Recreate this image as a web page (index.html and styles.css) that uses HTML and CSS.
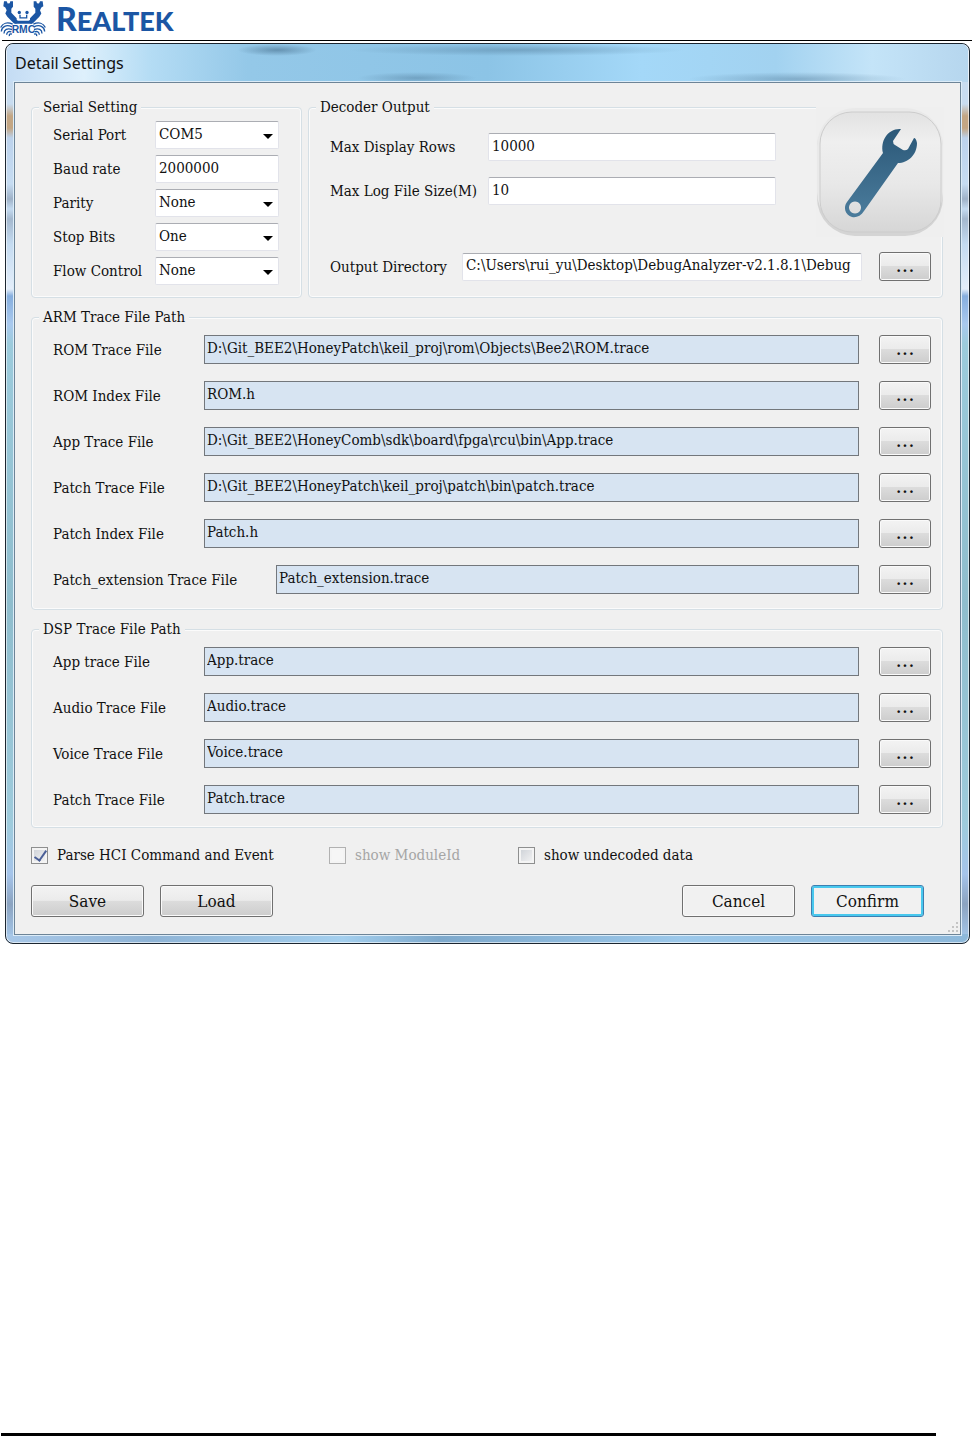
FILE: index.html
```
<!DOCTYPE html>
<html lang="en">
<head>
    <meta charset="UTF-8">
    <meta name="viewport" content="width=device-width, initial-scale=1.0">
    <title>Detail Settings</title>
    <link rel="stylesheet" href="styles.css">
</head>
<body>
    <header class="page-header">
        <svg class="crab" viewBox="0 0 138 110" aria-hidden="true">
            <path d="M12 3h8l3 7 6-1 2-6h8v17l-5 6v12l16 16v16H42L22 50l-6-10 4-10-4-8-6-4z"/>
            <path d="M128 3h-8l-3 7-6-1-2-6h-8v17l5 6v12L90 54v16h8l20-20 6-10-4-10 4-8 6-4z"/>
            <path d="M44 56l10 6h32l10-6v15H44z"/>
            <circle cx="58" cy="37" r="5"/>
            <circle cx="81" cy="37" r="5"/>
            <path class="line" d="M60 44v9h20v-9"/>
            <path class="line" d="M2 82c6-13 20-17 36-10M4 94c1-15 15-22 32-14M12 100c0-12 10-17 24-12M20 104c0-8 6-12 14-9M28 108c-1-6 3-8 8-6"/>
            <path class="line" d="M136 82c-6-13-20-17-36-10M134 94c-1-15-15-22-32-14M126 100c0-12-10-17-24-12M118 104c0-8-6-12-14-9M110 108c1-6-3-8-8-6"/>
            <text x="35" y="99">RMC</text>
        </svg>
        <span class="brand"><span class="brand-initial">R</span>EALTEK</span>
    </header>

    <main class="window">
        <h1 class="titlebar">Detail Settings</h1>
        <form class="client" onsubmit="return false">
            <div class="top-groups">
                <fieldset class="group">
                    <legend>Serial Setting</legend>
                    <div class="serial-rows">
                        <div class="serial-row">
                            <label for="serialPort">Serial Port</label>
                            <span class="combo"><select id="serialPort"><option>COM5</option></select></span>
                        </div>
                        <div class="serial-row">
                            <label for="baudRate">Baud rate</label>
                            <input type="text" id="baudRate" value="2000000">
                        </div>
                        <div class="serial-row">
                            <label for="parity">Parity</label>
                            <span class="combo"><select id="parity"><option>None</option></select></span>
                        </div>
                        <div class="serial-row">
                            <label for="stopBits">Stop Bits</label>
                            <span class="combo"><select id="stopBits"><option>One</option></select></span>
                        </div>
                        <div class="serial-row">
                            <label for="flowControl">Flow Control</label>
                            <span class="combo"><select id="flowControl"><option>None</option></select></span>
                        </div>
                    </div>
                </fieldset>

                <fieldset class="group decoder">
                    <legend>Decoder Output</legend>
                    <div class="decoder-rows">
                        <div class="decoder-row">
                            <label for="maxRows">Max Display Rows</label>
                            <input type="text" id="maxRows" value="10000">
                        </div>
                        <div class="decoder-row">
                            <label for="maxSize">Max Log File Size(M)</label>
                            <input type="text" id="maxSize" value="10">
                        </div>
                        <div class="output-row">
                            <label for="outputDir">Output Directory</label>
                            <input type="text" id="outputDir" value="C:\Users\rui_yu\Desktop\DebugAnalyzer-v2.1.8.1\Debug">
                            <button type="button" class="browse">...</button>
                        </div>
                    </div>
                    <svg class="wrench" viewBox="0 0 128 130" aria-hidden="true">
                        <defs>
                            <linearGradient id="tile" x1="0" y1="0" x2="0" y2="1">
                                <stop offset="0" stop-color="#e2e2e2"/>
                                <stop offset=".25" stop-color="#efefef"/>
                                <stop offset=".6" stop-color="#e8e8e8"/>
                                <stop offset="1" stop-color="#d6d6d6"/>
                            </linearGradient>
                            <linearGradient id="steel" x1="0" y1="0" x2="0" y2="1">
                                <stop offset="0" stop-color="#2b5878"/>
                                <stop offset="1" stop-color="#4b7c9c"/>
                            </linearGradient>
                        </defs>
                        <rect width="128" height="130" fill="#efefef"/>
                        <rect x="1" y="3" width="126" height="126" rx="38" fill="#d4d4d4"/>
                        <rect x="1" y="1" width="126" height="122" rx="38" fill="#e9e9e9"/>
                        <rect x="4" y="5" width="121" height="120" rx="32" fill="url(#tile)" stroke="#cccccc"/>
                        <path fill="url(#steel)" fill-rule="evenodd" d="M85 22L77 34Q77 37 79 38L87 43Q90 44 92 42L98 31Q100 31 101 36C101 48 92 56 82 56L48 104C45 109 40 111 36 110C29 108 27 100 31 95L67 46C64 34 72 21 85 22ZM39 94.500a6 6 0 1 0 .01 0Z"/>
                    </svg>
                </fieldset>
            </div>

            <fieldset class="group arm">
                <legend>ARM Trace File Path</legend>
                <div class="file-rows">
                    <div class="file-row">
                        <label for="armRomTrace">ROM Trace File</label>
                        <input type="text" id="armRomTrace" value="D:\Git_BEE2\HoneyPatch\keil_proj\rom\Objects\Bee2\ROM.trace">
                        <button type="button" class="browse">...</button>
                    </div>
                    <div class="file-row">
                        <label for="armRomIndex">ROM Index File</label>
                        <input type="text" id="armRomIndex" value="ROM.h">
                        <button type="button" class="browse">...</button>
                    </div>
                    <div class="file-row">
                        <label for="armAppTrace">App Trace File</label>
                        <input type="text" id="armAppTrace" value="D:\Git_BEE2\HoneyComb\sdk\board\fpga\rcu\bin\App.trace">
                        <button type="button" class="browse">...</button>
                    </div>
                    <div class="file-row">
                        <label for="armPatchTrace">Patch Trace File</label>
                        <input type="text" id="armPatchTrace" value="D:\Git_BEE2\HoneyPatch\keil_proj\patch\bin\patch.trace">
                        <button type="button" class="browse">...</button>
                    </div>
                    <div class="file-row">
                        <label for="armPatchIndex">Patch Index File</label>
                        <input type="text" id="armPatchIndex" value="Patch.h">
                        <button type="button" class="browse">...</button>
                    </div>
                    <div class="file-row long-label">
                        <label for="armPatchExt">Patch_extension Trace File</label>
                        <input type="text" id="armPatchExt" value="Patch_extension.trace">
                        <button type="button" class="browse">...</button>
                    </div>
                </div>
            </fieldset>

            <fieldset class="group">
                <legend>DSP Trace File Path</legend>
                <div class="file-rows">
                    <div class="file-row">
                        <label for="dspApp">App trace File</label>
                        <input type="text" id="dspApp" value="App.trace">
                        <button type="button" class="browse">...</button>
                    </div>
                    <div class="file-row">
                        <label for="dspAudio">Audio Trace File</label>
                        <input type="text" id="dspAudio" value="Audio.trace">
                        <button type="button" class="browse">...</button>
                    </div>
                    <div class="file-row">
                        <label for="dspVoice">Voice Trace File</label>
                        <input type="text" id="dspVoice" value="Voice.trace">
                        <button type="button" class="browse">...</button>
                    </div>
                    <div class="file-row">
                        <label for="dspPatch">Patch Trace File</label>
                        <input type="text" id="dspPatch" value="Patch.trace">
                        <button type="button" class="browse">...</button>
                    </div>
                </div>
            </fieldset>

            <div class="options">
                <label class="check"><input type="checkbox" checked>Parse HCI Command and Event</label>
                <label class="check disabled"><input type="checkbox" disabled>show ModuleId</label>
                <label class="check"><input type="checkbox">show undecoded data</label>
            </div>

            <div class="actions">
                <button type="button" class="action">Save</button>
                <button type="button" class="action">Load</button>
                <button type="button" class="action flat push">Cancel</button>
                <button type="submit" class="action flat primary">Confirm</button>
            </div>

            <svg class="grip" viewBox="0 0 12 12" aria-hidden="true">
                <path d="M9 1h2v2H9zM5 5h2v2H5zM9 5h2v2H9zM1 9h2v2H1zM5 9h2v2H5zM9 9h2v2H9z"/>
            </svg>
        </form>
    </main>

    <footer class="page-footer"></footer>
</body>
</html>
```

FILE: styles.css
```
* {
    margin: 0;
    padding: 0;
    box-sizing: border-box;
}

body {
    display: flex;
    flex-direction: column;
    min-height: 100vh;
    background: white;
    color: #111;
    font-family: 'DejaVu Serif Condensed', 'DejaVu Serif', serif;
    font-size: 15px;
    font-stretch: condensed;
    line-height: 20px;
}

input, select, button {
    font: inherit;
    color: inherit;
}

.page-header {
    display: flex;
    align-items: flex-start;
    gap: 10px;
    height: 41px;
    margin-left: 2px;
    border-bottom: 1px solid black;
}

.crab {
    width: 46px;
    height: 37px;
    margin-left: -2px;
    fill: #1b56a4;
}

.crab .line {
    fill: none;
    stroke: #1b56a4;
    stroke-width: 4;
}

.crab text {
    font: bold 31px 'Liberation Sans', sans-serif;
}

.brand {
    color: #1b56a4;
    font: 900 27px/37px Lato, sans-serif;
}

.brand-initial {
    font-size: 32px;
}

/* Window frame */
.window {
    margin: 2px 2px 0 5px;
    padding: 0 8px 8px;
    border: 1px solid #1c2630;
    border-radius: 8px;
    background:
        linear-gradient(to right, #a9c8e8, #8fb4d6 15%, #a4cfee 35%, #7ea9cc 45%, #9cc8ea 70%, #8db8da) bottom / 100% 9px no-repeat,
        linear-gradient(#c8dcf0 0, #c8dcf0 60px, #c3a684 72px, #c3a684 84px, #bcd2ec 94px, #c6dcf2 140px, #9fb2c8 155px, #c4dbf1 165px, #a4b8ce 175px, #c4dbf1 200px, #e4eefa 245px, #86aede 252px, #a9c9ee 280px, #9ccbdc 300px, #8fbdcd 560px, #9ecbdc 780px, #a5c4ea 830px, #8ba3c0 860px, #a8cbee);
    box-shadow: inset 0 0 0 1px rgba(255, 255, 255, .6);
}

.titlebar {
    height: 38px;
    margin: 0 -7px;
    padding-left: 8px;
    border-radius: 7px 7px 0 0;
    background:
        radial-gradient(ellipse at center, rgba(70, 110, 140, .6), transparent 70%) 230px 0 / 80px 12px no-repeat,
        radial-gradient(ellipse at center, rgba(70, 110, 140, .4), transparent 70%) 340px 0 / 340px 12px no-repeat,
        radial-gradient(ellipse at center, rgba(70, 110, 140, .4), transparent 70%) 350px 28px / 120px 12px no-repeat,
        radial-gradient(ellipse at center, rgba(70, 110, 140, .4), transparent 70%) 680px 28px / 220px 14px no-repeat,
        linear-gradient(to right, #c4dcf4, #def0fc 8%, #b4dcf4 15%, #94c8e8 25%, #8cc4e6 50%, #a4d8f8 66%, #a2d2f0 80%, #c4e4f8 90%, #b6d6ee);
    font: 16px/39px 'Noto Sans', sans-serif;
}

.client {
    position: relative;
    padding: 14px 17px 17px 16px;
    border: 1px solid #6d8497;
    background: #f0f0f0;
    box-shadow: 0 0 0 1px #dcecf8;
}

/* Groups */
.top-groups {
    display: grid;
    grid-template-columns: 271px 1fr;
    gap: 6px;
}

.group {
    display: flex;
    flex-direction: column;
    min-width: 0;
    padding: 0 11px 12px 7px;
    border: 1px solid #d5dfe5;
    border-radius: 4px;
    box-shadow: inset 0 0 0 1px #fbfbfb;
}

.group.arm {
    padding-bottom: 14px;
}

.group + .group,
.top-groups + .group {
    margin-top: 9px;
}

.top-groups .group {
    margin-top: 0;
}

.group legend {
    padding: 0 4px;
    background: #f0f0f0;
}

.group input,
.group select {
    width: 100%;
    height: 28px;
    padding: 0 3px 3px;
    border: 1px solid #e2e3ea;
    border-top-color: #abadb3;
    border-radius: 2px;
    background: white;
}

.serial-rows {
    display: flex;
    flex: 1;
    flex-direction: column;
    gap: 6px;
    padding: 4px 11px 0 14px;
}

.serial-row {
    display: grid;
    grid-template-columns: 102px 1fr;
    align-items: center;
}

.combo {
    position: relative;
    display: block;
}

.combo select {
    display: block;
    appearance: none;
}

.combo::after {
    content: '';
    position: absolute;
    top: 13px;
    right: 6px;
    border: 5px solid transparent;
    border-top-color: black;
    border-bottom: 0;
    pointer-events: none;
}

.decoder {
    position: relative;
}

.decoder-rows {
    padding: 16px 0 0 14px;
}

.decoder-row {
    display: grid;
    grid-template-columns: 158px minmax(0, 288px);
    align-items: center;
    margin-bottom: 16px;
}

.output-row {
    display: grid;
    grid-template-columns: 132px 1fr 52px;
    align-items: center;
    margin-top: 47px;
}

.output-row input {
    width: calc(100% - 17px);
}

.wrench {
    position: absolute;
    top: -10px;
    right: -2px;
    width: 128px;
    height: 130px;
}

.file-rows {
    display: grid;
    gap: 17px;
    padding: 8px 0 1px 14px;
}

.file-row {
    display: grid;
    grid-template-columns: 151px 1fr 52px;
    align-items: center;
}

.file-row.long-label {
    grid-template-columns: 223px 1fr 52px;
}

.file-row input {
    width: calc(100% - 20px);
    height: 29px;
    padding: 0 2px 4px;
    border: 1px solid #73777c;
    border-radius: 0;
    background: #d7e4f2;
}

.group input[type="text"] {
    line-height: 24px;
}

.browse,
.action {
    border: 1px solid #707070;
    border-radius: 3px;
    background: linear-gradient(#f3f3f3, #ebebeb 48%, #dcdcdc 50%, #cdcdcd);
    box-shadow: inset 0 0 0 1px #fafafa;
}

.browse {
    height: 29px;
    padding-bottom: 4px;
    font-family: 'DejaVu Serif', serif;
    font-size: 20px;
    font-stretch: normal;
}

/* Bottom part */
.options {
    display: grid;
    grid-template-columns: 298px 189px 1fr;
    margin-top: 17px;
}

.check {
    display: flex;
    align-items: center;
    gap: 9px;
}

.check input {
    position: relative;
    width: 17px;
    height: 17px;
    border: 1px solid #8e8f8f;
    background: linear-gradient(135deg, #cbcfd5, #f6f6f6);
    box-shadow: inset 0 0 0 2px #f4f4f4;
    appearance: none;
}

.check input:checked::after {
    content: '';
    position: absolute;
    top: 0;
    left: 5px;
    width: 5px;
    height: 11px;
    border: solid #4a5f97;
    border-width: 0 2px 2px 0;
    transform: rotate(35deg);
}

.check.disabled {
    color: #a5a5a5;
}

.check.disabled input {
    border-color: #b1b1b1;
    background: #f6f6f6;
}

.actions {
    display: flex;
    gap: 16px;
    margin: 20px 19px 0 0;
}

.action {
    width: 113px;
    height: 32px;
    font-size: 17px;
}

.action.flat {
    background: #f1f1f1;
}

.action.push {
    margin-left: auto;
}

.action.primary {
    border-color: #3c7fb1;
    box-shadow: inset 0 0 0 2px #48c8ee;
}

.grip {
    position: absolute;
    right: 1px;
    bottom: 1px;
    width: 12px;
    height: 12px;
    fill: #c4c4c4;
}

.page-footer {
    margin: auto 36px 0 1px;
    border-bottom: 3px solid black;
}
```
